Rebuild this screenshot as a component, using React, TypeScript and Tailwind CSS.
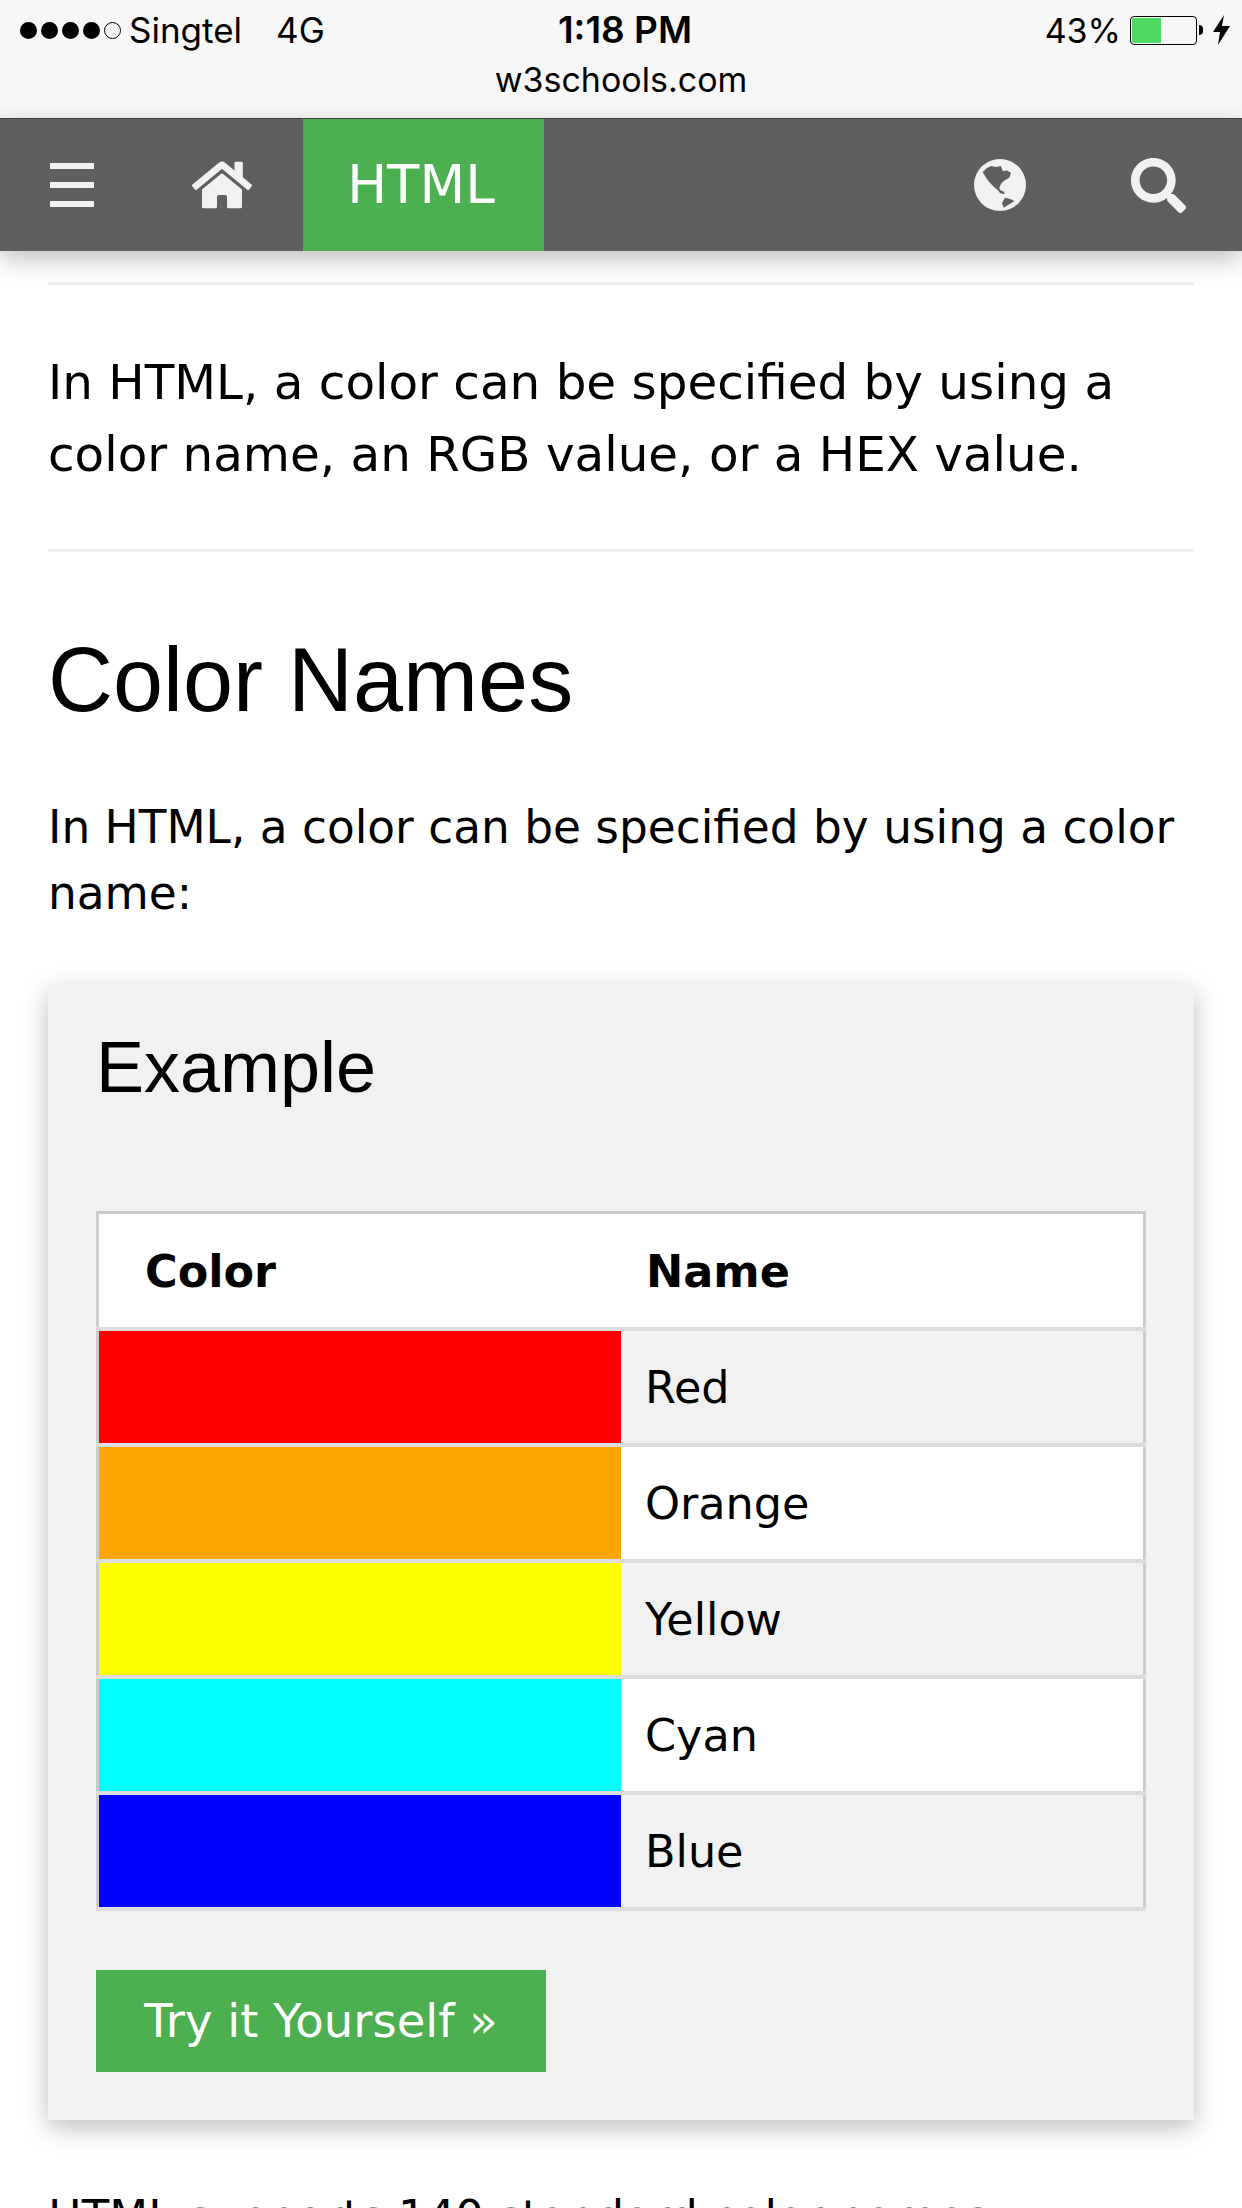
import { FaHome, FaSearch } from 'react-icons/fa';

const ROWS = [
  { color: 'bg-[#ff0000]', name: 'Red', shade: true },
  { color: 'bg-[#ffa500]', name: 'Orange', shade: false },
  { color: 'bg-[#ffff00]', name: 'Yellow', shade: true },
  { color: 'bg-[#00ffff]', name: 'Cyan', shade: false },
  { color: 'bg-[#0000ff]', name: 'Blue', shade: true },
];

function StatusBar() {
  return (
    <div className="h-[119px] bg-[#f7f7f7] text-black font-['Inter',sans-serif] border-b border-[#444]">
      <div className="h-[60px] flex items-center justify-between pl-[20px] pr-[12px]">
        <div className="w-[400px] flex items-center text-[35px]">
          <div className="flex gap-[4px] mr-[8px]">
            <span className="w-[17px] h-[17px] rounded-full bg-black" />
            <span className="w-[17px] h-[17px] rounded-full bg-black" />
            <span className="w-[17px] h-[17px] rounded-full bg-black" />
            <span className="w-[17px] h-[17px] rounded-full bg-black" />
            <span className="w-[17px] h-[17px] rounded-full border border-black" />
          </div>
          <span>Singtel</span>
          <span className="ml-[34px]">4G</span>
        </div>
        <div className="text-[37px] font-semibold">1:18 PM</div>
        <div className="w-[400px] flex items-center justify-end text-[34px]">
          <span>43%</span>
          <div className="ml-[9px] w-[67px] h-[29px] rounded-[4px] border border-black p-[1px]">
            <div className="w-[29px] h-full bg-[#4cd964] rounded-l-[2px]" />
          </div>
          <div className="ml-[2px] w-[4px] h-[10px] rounded-r-full bg-black" />
          <svg className="ml-[10px]" width="17" height="30" viewBox="0 0 17 30">
            <path d="M11 0 L0 17 H7 L5 30 L17 11 H9 Z" fill="#000" />
          </svg>
        </div>
      </div>
      <div className="text-center text-[34px] leading-[40px]">w3schools.com</div>
    </div>
  );
}

function GlobeIcon() {
  return (
    <svg width="52" height="52" viewBox="0 0 52 52">
      <circle cx="26" cy="26" r="26" fill="#f1f1f1" />
      <path
        d="M8.7 13 L13 9 L17 7 L22 8 L27 7 L28.7 12 L33 11.5 L37 13.7 L35.3 18.7 L29.7 22 L27 25 L25.3 28.7 L26 31 L30.3 33 L30.3 35.3 L26 34 L23.7 31 L19.7 27.7 L14.3 22 L11 17 Z"
        fill="#5f5f5f"
      />
      <path d="M31 38.7 L37 40.3 L40.3 42 L35.3 45.3 L29.7 48.7 L28 44 Z" fill="#5f5f5f" />
    </svg>
  );
}

function NavBar() {
  return (
    <div className="relative z-10 h-[132px] bg-[#5f5f5f] text-[#f1f1f1] flex items-center shadow-[0_8px_24px_rgba(0,0,0,0.25)]">
      <div className="w-[143px] flex justify-start pl-[50px]">
        <div className="w-[44px] flex flex-col gap-[13px]">
          <div className="h-[6px] bg-[#f1f1f1]" />
          <div className="h-[6px] bg-[#f1f1f1]" />
          <div className="h-[6px] bg-[#f1f1f1]" />
        </div>
      </div>
      <div className="w-[160px] flex justify-start pl-[49px]">
        <FaHome size={60} />
      </div>
      <div className="w-[241px] h-full bg-[#4caf50] flex items-center justify-center pr-[5px] text-white text-[53px] font-['DejaVu_Sans',sans-serif]">
        HTML
      </div>
      <div className="ml-auto flex items-center gap-[105px] pr-[56px]">
        <GlobeIcon />
        <FaSearch size={55} />
      </div>
    </div>
  );
}

function ColorTable() {
  return (
    <table className="w-full border-collapse border-[3px] border-[#ccc] font-['DejaVu_Sans',sans-serif] text-[44.5px] text-black table-fixed">
      <thead>
        <tr className="bg-white h-[116px] border-b-[4px] border-[#ddd]">
          <th className="text-left font-bold pl-[46px] pt-[4px]">Color</th>
          <th className="text-left font-bold pl-[25px] pt-[4px]">Name</th>
        </tr>
      </thead>
      <tbody>
        {ROWS.map((row) => (
          <tr key={row.name} className={`h-[116px] border-b-[4px] border-[#ddd] ${row.shade ? 'bg-[#f1f1f1]' : 'bg-white'}`}>
            <td className={row.color} />
            <td className="pl-[24px] pt-[4px]">{row.name}</td>
          </tr>
        ))}
      </tbody>
    </table>
  );
}

export default function App() {
  return (
    <div className="h-[2208px] overflow-hidden bg-white">
      <StatusBar />
      <NavBar />
      <div className="px-[48px] pt-[31px]">
        <div className="h-[3px] bg-[#eee]" />
        <p className="mt-[61px] text-[48.4px] leading-[72px] text-black font-['DejaVu_Sans',sans-serif]">
          In HTML, a color can be specified by using a color name, an RGB value, or a HEX value.
        </p>
        <div className="mt-[59px] h-[3px] bg-[#eee]" />
        <h1 className="mt-[78px] text-[90px] leading-[100px] text-black font-['Liberation_Sans',sans-serif]">Color Names</h1>
        <p className="mt-[65px] text-[45.4px] leading-[66px] text-black font-['DejaVu_Sans',sans-serif]">
          In HTML, a color can be specified by using a color name:
        </p>
        <div className="mt-[57px] h-[1136px] bg-[#f1f1f1] px-[48px] pt-[43px] shadow-[0_8px_24px_rgba(0,0,0,0.25)]">
          <h2 className="text-[72px] leading-[80px] text-black font-['Liberation_Sans',sans-serif]">Example</h2>
          <div className="mt-[104px]">
            <ColorTable />
          </div>
          <div className="mt-[59px] w-[450px] h-[102px] bg-[#4caf50] flex items-center justify-center pt-[3px] text-white text-[46.5px] font-['DejaVu_Sans',sans-serif]">
            Try it Yourself »
          </div>
        </div>
        <p className="mt-[64px] text-[45px] leading-[66px] text-black font-['DejaVu_Sans',sans-serif]">
          HTML supports 140 standard color names.
        </p>
      </div>
    </div>
  );
}
